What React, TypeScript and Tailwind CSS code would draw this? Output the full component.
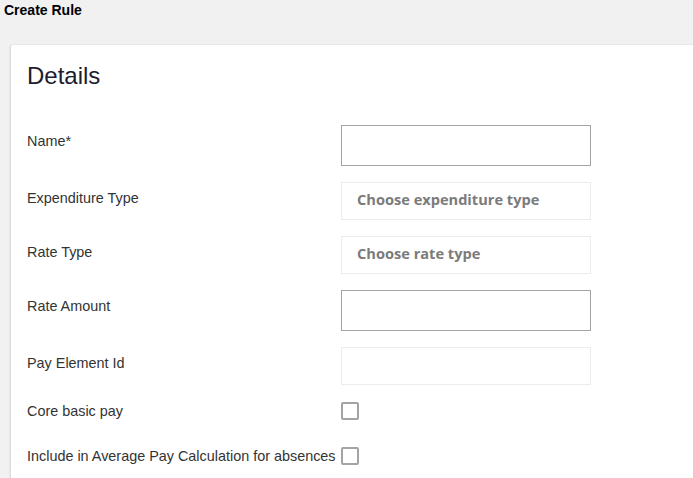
import React from 'react';

const TextField: React.FC<{ strong?: boolean }> = ({ strong }) =>
  strong ? (
    <div className="w-[250px] h-[41px] bg-white border border-[#a3a3a3]" />
  ) : (
    <div className="w-[250px] h-[38px] bg-white border border-[#ececec]" />
  );

const SelectField: React.FC<{ placeholder: string }> = ({ placeholder }) => (
  <div className="w-[250px] h-[38px] border border-[#ececec] bg-white flex items-center pl-[15px] pb-[3px]">
    <span className="text-[14.6px] font-bold text-[#7b7b7b] font-['Open_Sans',sans-serif] leading-none">
      {placeholder}
    </span>
  </div>
);

const Checkbox: React.FC = () => (
  <div className="w-[18px] h-[18px] border-2 border-[#a3a3a3] rounded-[2px] bg-white" />
);

const Row: React.FC<{ label: string; children: React.ReactNode; className?: string }> = ({
  label,
  children,
  className,
}) => (
  <div className={`flex items-start ${className ?? ''}`}>
    <div className="w-[314px] shrink-0 pt-[4px]">
      <span className="text-[14.4px] text-[#333] leading-[16px] whitespace-nowrap">{label}</span>
    </div>
    {children}
  </div>
);

const CheckRow: React.FC<{ label: string; className?: string }> = ({ label, className }) => (
  <div className={`flex items-center h-[18px] ${className ?? ''}`}>
    <div className="w-[314px] shrink-0">
      <span className="text-[14.4px] text-[#333] leading-[16px] whitespace-nowrap">{label}</span>
    </div>
    <Checkbox />
  </div>
);

export default function App() {
  return (
    <div className="w-[693px] h-[478px] overflow-hidden bg-[#f1f1f1] font-['Liberation_Sans',Arial,sans-serif]">
      <div className="pl-[4px] pt-[2px] h-[45px]">
        <h1 className="text-[14px] font-bold text-black leading-[16px]">Create Rule</h1>
      </div>
      <div className="ml-[11px] w-[700px] bg-white rounded-tl-[2px] shadow-[-1px_0_2px_rgba(0,0,0,0.12)] pl-[16px] pt-[17px] pb-[40px]">
        <h2 className="text-[24px] text-[#1c1c2e] leading-[28px]">Details</h2>
        <div className="mt-[35px] flex flex-col">
          <Row label="Name*">
            <TextField strong />
          </Row>
          <Row label="Expenditure Type" className="mt-[16px]">
            <SelectField placeholder="Choose expenditure type" />
          </Row>
          <Row label="Rate Type" className="mt-[16px]">
            <SelectField placeholder="Choose rate type" />
          </Row>
          <Row label="Rate Amount" className="mt-[16px]">
            <TextField strong />
          </Row>
          <Row label="Pay Element Id" className="mt-[16px]">
            <TextField />
          </Row>
          <CheckRow label="Core basic pay" className="mt-[17px]" />
          <CheckRow label="Include in Average Pay Calculation for absences" className="mt-[27px]" />
        </div>
      </div>
    </div>
  );
}
